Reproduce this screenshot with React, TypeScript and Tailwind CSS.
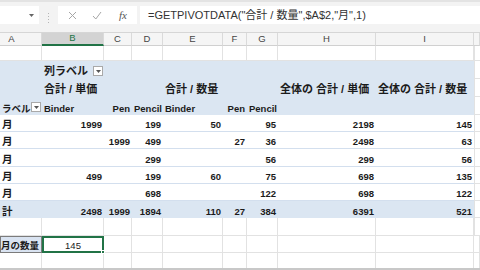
import React from "react"

const W = ["w-[42px]", "w-[62px]", "w-[28px]", "w-[31px]", "w-[60px]", "w-[24px]", "w-[31px]", "w-[98px]", "w-[98px]", "w-[6px]"]

type Cell = { t?: React.ReactNode; r?: boolean; c?: boolean; cls?: string }

const Drop = () => (
  <span className="ml-auto mr-[1px] mb-[1px] flex h-[10px] w-[10px] shrink-0 items-center justify-center border border-[#a9a9a9] bg-white">
    <svg width="5" height="3" viewBox="0 0 5 3">
      <path d="M0 0H5L2.5 3Z" fill="#555" />
    </svg>
  </span>
)

const Row = ({ h, cells, kind }: { h: string; cells: Cell[]; kind: "grid" | "head" | "data" | "total" }) => {
  const pivot = kind !== "grid"
  const rowBg = kind === "head" || kind === "total" ? "bg-[#dbe6f2]" : "bg-white"
  return (
    <div className={`flex ${h}`}>
      <div className={`flex ${rowBg} ${kind === "data" ? "border-b border-[#d3dfee]" : ""}`}>
        {W.slice(0, 9).map((w, i) => {
          const c = cells[i] || {}
          return (
            <div
              key={i}
              className={`${w} flex items-end overflow-hidden whitespace-nowrap pb-[2px] leading-none ${pivot ? "" : "border-r border-b border-[#e2e2e2]"} ${c.r ? "justify-end pr-[2px]" : c.c ? "justify-center" : "pl-[2px]"} ${c.cls || ""}`}
            >
              {c.t}
            </div>
          )
        })}
      </div>
      <div className="w-[6px] border-l border-b border-[#e2e2e2] bg-white" />
    </div>
  )
}

const n = (v: string): Cell => ({ t: v, r: true })
const a = (v: string): Cell => ({ t: <span className="text-[10.5px]">{v}</span>, cls: "pl-0" })

const months: Cell[][] = [
  [a("月"), n("1999"), {}, n("199"), n("50"), {}, n("95"), n("2198"), n("145")],
  [a("月"), {}, n("1999"), n("499"), {}, n("27"), n("36"), n("2498"), n("63")],
  [a("月"), {}, {}, n("299"), {}, {}, n("56"), n("299"), n("56")],
  [a("月"), n("499"), {}, n("199"), n("60"), {}, n("75"), n("698"), n("135")],
  [a("月"), {}, {}, n("698"), {}, {}, n("122"), n("698"), n("122")],
]

const heads = ["A", "B", "C", "D", "E", "F", "G", "H", "I", ""]

export default function App() {
  return (
    <div className="h-[270px] w-[480px] overflow-hidden bg-[#f3f3f3] font-[family-name:Liberation_Sans,Noto_Sans_CJK_JP,sans-serif] text-[9.5px] text-[#1b1b1b]">
      {/* formula bar */}
      <div className="flex h-[32px] border-t-2 border-[#e3e3e3] pt-[4px]">
        <div className="flex h-[18px] w-[39px] items-center justify-end bg-white pr-[5px]">
          <svg width="5" height="3" viewBox="0 0 5 3">
            <path d="M0 0H5L2.5 3Z" fill="#666" />
          </svg>
        </div>
        <div className="flex w-[19px] flex-col items-center justify-center gap-[2px] pb-[4px] pt-[2px]">
          <span className="h-[1px] w-[1px] bg-[#b5b5b5]" />
          <span className="h-[1px] w-[1px] bg-[#b5b5b5]" />
          <span className="h-[1px] w-[1px] bg-[#b5b5b5]" />
          <span className="h-[1px] w-[1px] bg-[#b5b5b5]" />
        </div>
        <div className="flex h-[18px] w-[79px] items-center bg-white">
          <svg className="ml-[10px]" width="9" height="9" viewBox="0 0 9 9">
            <path d="M1 1L8 8M8 1L1 8" stroke="#a6a6a6" strokeWidth="1" />
          </svg>
          <svg className="ml-[15px]" width="10" height="9" viewBox="0 0 10 9">
            <path d="M1 5L3.8 8L9 1" stroke="#a6a6a6" strokeWidth="1" fill="none" />
          </svg>
          <span className="ml-[17px] font-['Liberation_Serif',serif] text-[11px] italic text-[#555]">fx</span>
        </div>
        <div className="ml-[3px] flex h-[18px] flex-1 items-center bg-white pl-[8px] text-[11px] text-[#333]">
          =GETPIVOTDATA("合計 / 数量",$A$2,"月",1)
        </div>
      </div>

      {/* column headers */}
      <div className="flex h-[14px] border-t border-[#d6d6d6] bg-[#f5f5f5] text-[9.5px] text-[#444]">
        {W.map((w, i) => (
          <div
            key={i}
            className={`${w} flex items-center justify-center border-r border-[#dadada] ${i === 1 ? "border-b-2 border-b-[#217346] bg-[#d3d3d3] text-[#217346]" : "border-b border-b-[#d0d0d0]"} ${i === 0 ? "pr-[18px]" : ""}`}
          >
            {heads[i]}
          </div>
        ))}
      </div>

      <div className="bg-white font-bold">
        <Row h="h-[15px]" kind="grid" cells={[]} />
        <Row
          h="h-[18px]"
          kind="head"
          cells={[{}, { t: <><span className="text-[11px]">列ラベル</span><Drop /></>, cls: "pr-0" }]}
        />
        <Row
          h="h-[18px]"
          kind="head"
          cells={[
            {},
            { t: <span className="text-[11px]">合計 / 単価</span>, cls: "overflow-visible" },
            {},
            {},
            { t: <span className="text-[11px]">合計 / 数量</span>, cls: "overflow-visible" },
            {},
            {},
            { t: <span className="text-[11px]">全体の 合計 / 単価</span> },
            { t: <span className="text-[11px]">全体の 合計 / 数量</span> },
          ]}
        />
        <Row
          h="h-[18px]"
          kind="head"
          cells={[
            { t: <><span className="text-[9.5px]">ラベル</span><Drop /></>, cls: "pl-0" },
            { t: "Binder" },
            n("Pen"),
            { t: "Pencil", cls: "pl-[1px]" },
            { t: "Binder" },
            n("Pen"),
            { t: "Pencil" },
          ]}
        />
        {months.map((m, i) => (
          <Row key={i} h={i === 2 ? "h-[18px]" : "h-[17px]"} kind="data" cells={m} />
        ))}
        <Row
          h="h-[17px]"
          kind="total"
          cells={[a("計"), n("2498"), n("1999"), n("1894"), n("110"), n("27"), n("384"), n("6391"), n("521")]}
        />
        <Row h="h-[18px]" kind="grid" cells={[]} />
        <div className="flex h-[17px] font-normal leading-none">
          <div className="flex w-[42px] items-end overflow-hidden whitespace-nowrap border border-[#7b7b7b] bg-[#d9e3f1] pb-[2px]">
            <span className="text-[9.5px] font-bold">月の数量</span>
          </div>
          <div className="relative flex w-[62px] items-end justify-center border-2 border-[#217346] pb-[1px]">
            145
            <span className="absolute bottom-[-3px] right-[-3px] h-[4px] w-[4px] border border-white bg-[#217346]" />
          </div>
          {W.slice(2).map((w, i) => (
            <div key={i} className={`${w} border-r border-b border-[#e2e2e2]`} />
          ))}
        </div>
        <div className="flex h-[15px]">
          {W.map((w, i) => (
            <div key={i} className={`${w} border-r border-[#e2e2e2]`} />
          ))}
        </div>
      </div>
      <div className="h-[2px] bg-[#c8c8c8]" />
    </div>
  )
}
